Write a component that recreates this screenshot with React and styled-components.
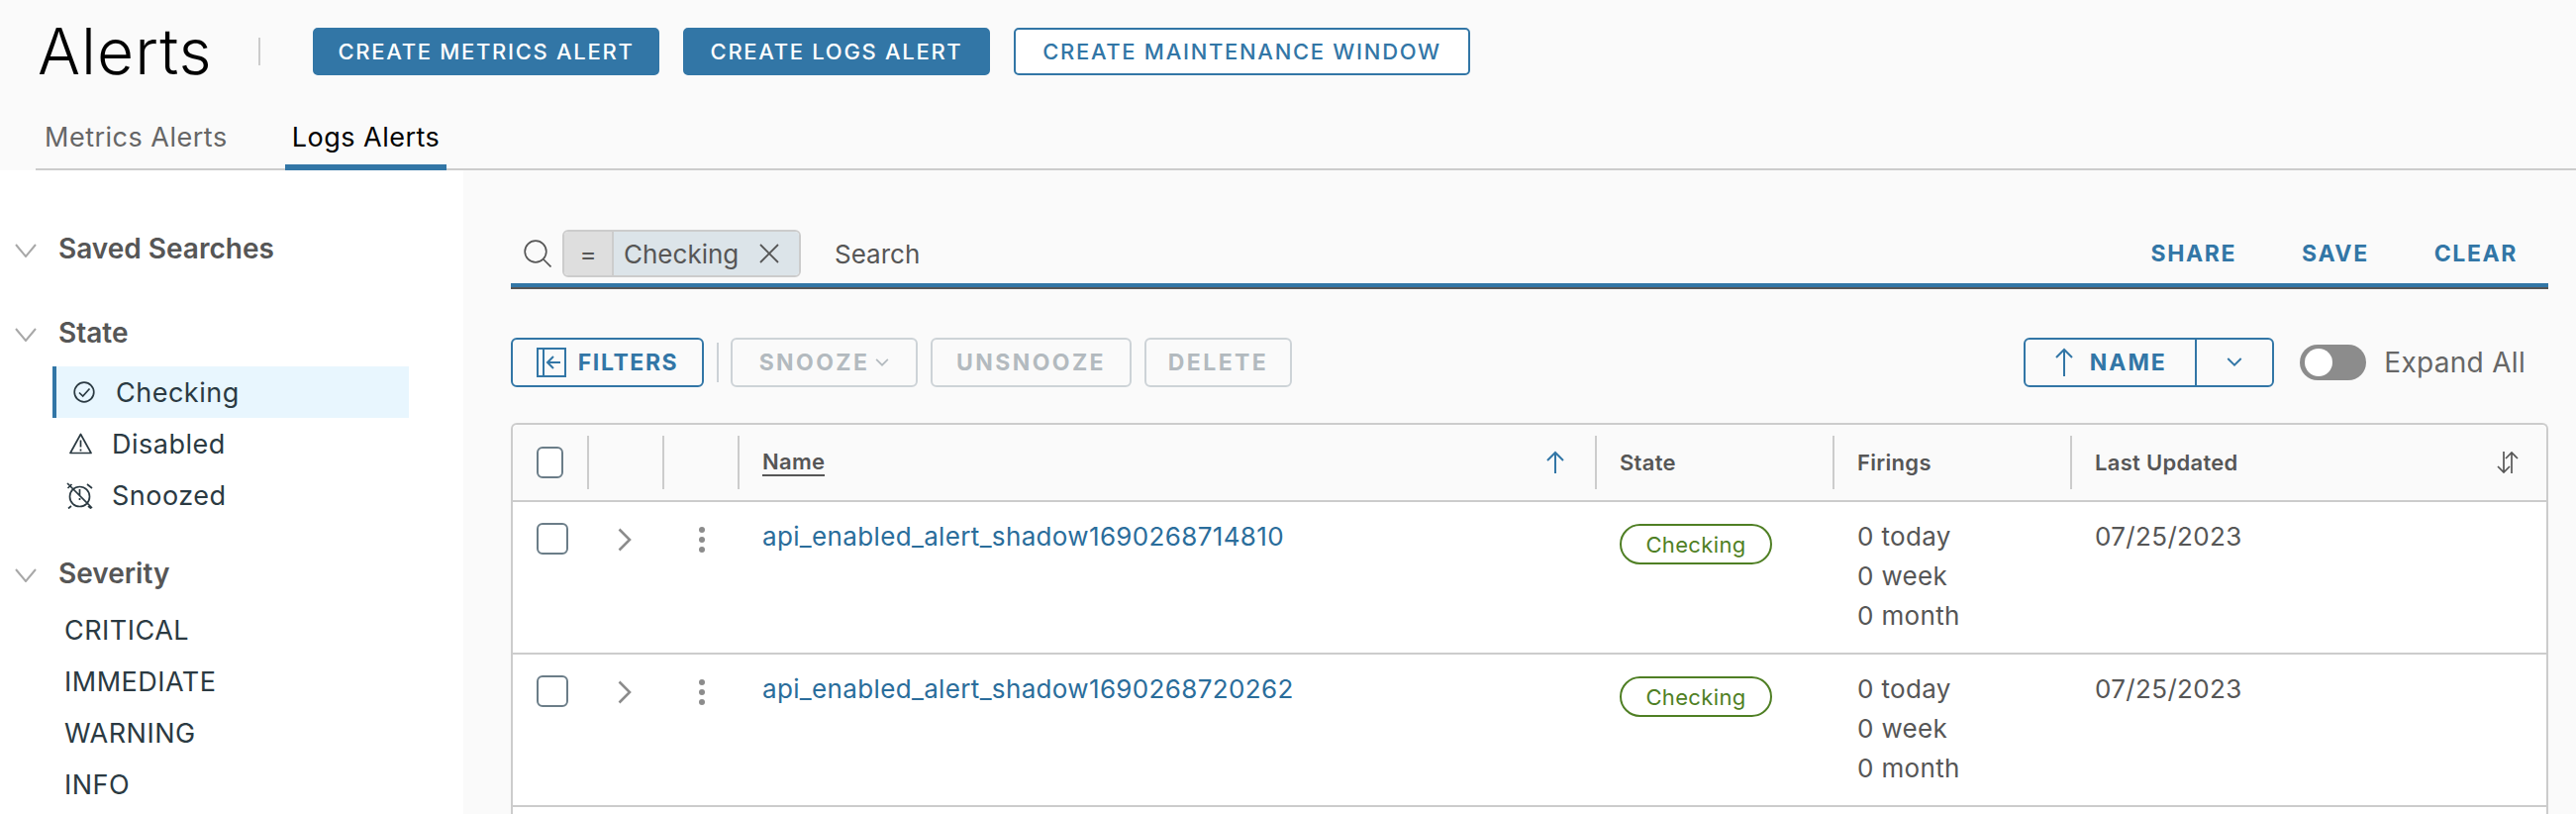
import React from 'react';
import styled, { createGlobalStyle } from 'styled-components';

const BLUE = '#3276a6';
const FONT = 'Inter, "Open Sans", "Liberation Sans", sans-serif';

const GlobalStyle = createGlobalStyle`
  html, body {
    margin: 0;
    padding: 0;
    background: #fff;
  }
  body {
    font-family: ${FONT};
    color: #565656;
    overflow: hidden;
  }
  * {
    box-sizing: border-box;
  }
`;

const Page = styled.div`
  width: 2602px;
  height: 822px;
  overflow: hidden;
  display: flex;
  flex-direction: column;
`;

// 상단 헤더
const Header = styled.header`
  height: 172px;
  flex: none;
  background: #fafafa;
  padding: 28px 0 0 36px;
  display: flex;
  flex-direction: column;
`;

const TitleRow = styled.div`
  display: flex;
  align-items: center;
  height: 48px;
`;

const Title = styled.h1`
  margin: 0 53px 0 2px;
  width: 225px;
  font-size: 64px;
  font-weight: 300;
  letter-spacing: 1px;
  line-height: 48px;
  color: #000;
  display: flex;
  align-items: center;
  justify-content: space-between;

  &::after {
    content: '';
    width: 2px;
    height: 28px;
    background: #ccc;
  }
`;

const ActionButton = styled.button`
  height: 48px;
  width: ${(props) => props.$width}px;
  margin-right: 24px;
  padding: 0;
  border: 2px solid ${BLUE};
  border-radius: 5px;
  background: ${(props) => (props.$outline ? '#fff' : BLUE)};
  color: ${(props) => (props.$outline ? BLUE : '#fff')};
  font-family: ${FONT};
  font-size: 22px;
  font-weight: 500;
  letter-spacing: 1.7px;
`;

const Tabs = styled.nav`
  margin-top: auto;
  height: 68px;
  padding-left: 2px;
  display: flex;
  border-bottom: 2px solid #ccc;
`;

const Tab = styled.div`
  height: 68px;
  padding: 0 7px;
  margin-right: 51px;
  font-size: 27px;
  letter-spacing: 0.5px;
  line-height: 70px;
  color: ${(props) => (props.$active ? '#000' : '#666')};
  border-bottom: ${(props) => (props.$active ? `6px solid ${BLUE}` : 'none')};
`;

const Body = styled.div`
  flex: 1;
  display: grid;
  grid-template-columns: 468px 1fr;
  min-height: 0;
`;

// 왼쪽 필터 영역
const Sidebar = styled.aside`
  background: #fff;
  padding-top: 53px;
`;

const Section = styled.section`
  margin-bottom: ${(props) => props.$after}px;
`;

const SectionHead = styled.div`
  height: 52px;
  display: flex;
  align-items: center;
  gap: 22px;
  padding-left: 15px;
  font-size: 28px;
  font-weight: 600;
  color: #565656;
`;

const FilterList = styled.ul`
  list-style: none;
  margin: ${(props) => props.$top}px 0 0;
  padding: 0;
`;

const FilterItem = styled.li`
  height: 52px;
  margin-left: ${(props) => (props.$active ? 53 : 0)}px;
  width: ${(props) => (props.$active ? 360 : 413)}px;
  padding-left: ${(props) => props.$left}px;
  display: flex;
  align-items: center;
  gap: ${(props) => props.$gap ?? 0}px;
  font-size: 27px;
  letter-spacing: 0.5px;
  color: #2b3a42;
  background: ${(props) => (props.$active ? '#e8f6fe' : 'transparent')};
  border-left: ${(props) => (props.$active ? `4px solid ${BLUE}` : 'none')};
`;

const Content = styled.main`
  background: #fafafa;
  padding: 54px 28px 0 48px;
  display: flex;
  flex-direction: column;
  min-width: 0;
`;

const SearchBar = styled.div`
  height: 64px;
  flex: none;
  padding: 0 31px 0 13px;
  display: flex;
  align-items: center;
  border-bottom: 4px solid ${BLUE};
  box-shadow: 0 2px 0 #565656;
`;

const Chip = styled.div`
  display: flex;
  width: 241px;
  height: 48px;
  margin-left: 11px;
  border: 2px solid #ccc;
  border-radius: 6px;
  overflow: hidden;
  font-size: 26px;
  color: #565656;
`;

const ChipOperator = styled.span`
  width: 50px;
  flex: none;
  display: flex;
  align-items: center;
  justify-content: center;
  background: #dedede;
  border-right: 2px solid #ccc;
`;

const ChipValue = styled.span`
  flex: 1;
  display: flex;
  align-items: center;
  justify-content: space-between;
  padding: 0 20px 0 10px;
  background: #dce4e9;
`;

const SearchText = styled.span`
  margin-left: 34px;
  font-size: 26px;
  color: #565656;
`;

const SearchActions = styled.div`
  margin-left: auto;
  display: flex;
  gap: 66px;
`;

const TextAction = styled.span`
  font-size: 23px;
  font-weight: 700;
  letter-spacing: 1.6px;
  color: ${BLUE};
`;

const Toolbar = styled.div`
  height: 50px;
  flex: none;
  margin-top: 51px;
  display: flex;
  align-items: center;
`;

const ToolButton = styled.button`
  height: 50px;
  width: ${(props) => props.$width}px;
  margin-right: ${(props) => props.$after ?? 13}px;
  padding: 0;
  display: flex;
  align-items: center;
  justify-content: center;
  gap: ${(props) => props.$gap ?? 0}px;
  border: 2px solid ${(props) => (props.disabled ? '#cdd3d7' : BLUE)};
  border-radius: 6px;
  background: transparent;
  color: ${(props) => (props.disabled ? '#b3babf' : BLUE)};
  font-family: ${FONT};
  font-size: 23px;
  font-weight: 700;
  letter-spacing: ${(props) => (props.disabled ? 2.4 : 1.6)}px;
`;

const ToolDivider = styled.span`
  width: 2px;
  height: 40px;
  margin-right: 12px;
  background: #ccd2d6;
`;

const SortGroup = styled.div`
  margin-left: auto;
  width: 253px;
  height: 50px;
  display: flex;
  border: 2px solid ${BLUE};
  border-radius: 6px;
  color: ${BLUE};
`;

const SortLabel = styled.span`
  width: 173px;
  display: flex;
  align-items: center;
  justify-content: center;
  gap: 16px;
  border-right: 2px solid ${BLUE};
  font-size: 23px;
  font-weight: 700;
  letter-spacing: 2px;
`;

const SortCaret = styled.span`
  flex: 1;
  display: flex;
  align-items: center;
  justify-content: center;
`;

const Toggle = styled.span`
  width: 67px;
  height: 36px;
  margin: 0 18px 0 26px;
  flex: none;
  border-radius: 18px;
  background: #8c8c8c;
  padding: 4px 5px;

  &::before {
    content: '';
    display: block;
    width: 28px;
    height: 28px;
    border-radius: 50%;
    background: #fff;
  }
`;

const ToggleLabel = styled.span`
  font-size: 28px;
  letter-spacing: 0.3px;
  color: #666;
  margin-right: 23px;
  white-space: nowrap;
`;

// 테이블
const Table = styled.div`
  flex: 1;
  margin-top: 36px;
  background: #fff;
  border: 2px solid #ccc;
  border-bottom: none;
  border-radius: 6px 6px 0 0;
`;

const COLUMNS = '75px 76px 76px 866px 240px 240px 1fr';

const HeadRow = styled.div`
  display: grid;
  grid-template-columns: ${COLUMNS};
  height: 78px;
  align-items: center;
  background: #fafafa;
  border-bottom: 2px solid #ccc;
  border-radius: 6px 6px 0 0;
`;

const HeadCell = styled.div`
  height: 54px;
  display: flex;
  align-items: center;
  justify-content: space-between;
  padding: 0 ${(props) => props.$right ?? 24}px 0 ${(props) => (props.$first ? 24 : 23)}px;
  border-left: ${(props) => (props.$first ? 'none' : '2px solid #ccc')};
  font-size: 22px;
  font-weight: 600;
  letter-spacing: 0.3px;
  color: #565656;
`;

const NameLabel = styled.span`
  border-bottom: 2px solid #565656;
  line-height: 25px;
`;

const SortedArrow = styled.span`
  color: ${BLUE};
`;

const Row = styled.div`
  display: grid;
  grid-template-columns: ${COLUMNS};
  height: 154px;
  border-bottom: 2px solid #ccc;
  background: #fff;
`;

const Cell = styled.div`
  padding: ${(props) => props.$top ?? 15}px 0 0 ${(props) => props.$left ?? 25}px;
  font-size: 26px;
  letter-spacing: 0.35px;
  line-height: 40px;
  color: #565656;
`;

const Checkbox = styled.span`
  display: block;
  width: 32px;
  height: 32px;
  border: 2px solid #6b7d88;
  border-radius: 6px;
  background: #fff;
`;

const NameLink = styled.a`
  color: #2a6d9b;
  text-decoration: none;
`;

const Badge = styled.span`
  display: flex;
  align-items: center;
  justify-content: center;
  width: 154px;
  height: 41px;
  border: 2px solid #4f7f24;
  border-radius: 21px;
  font-size: 22px;
  color: #4f7f24;
`;

const Icon = styled.svg`
  display: block;
  flex: none;
  fill: none;
  stroke: currentColor;
`;

const Chevron = styled(Icon)`
  color: ${(props) => props.$color ?? '#a8a8a8'};
`;

const HeadChevron = styled(Chevron)`
  margin-top: 4px;
`;

const Dots = styled(Icon)`
  fill: #8c8c8c;
  stroke: none;
`;

const CollapseChevron = () => (
  <HeadChevron width="22" height="14" viewBox="0 0 22 14" strokeWidth="2">
    <path d="M1 1l10 12L21 1" />
  </HeadChevron>
);

const CaretDown = ({ size = 16, color }) => (
  <Chevron width={size} height={size * 0.6} viewBox="0 0 16 10" strokeWidth="2" $color={color}>
    <path d="M1 1l7 7 7-7" />
  </Chevron>
);

const SearchIcon = () => (
  <Icon width="28" height="28" viewBox="0 0 28 28" strokeWidth="1.7">
    <circle cx="12" cy="12" r="10.8" />
    <path d="M20 20l7.500 7.500" />
  </Icon>
);

const CloseIcon = () => (
  <Icon width="20" height="20" viewBox="0 0 20 20" strokeWidth="1.8">
    <path d="M1 1l18 18M19 1L1 19" />
  </Icon>
);

const FilterIcon = () => (
  <Icon width="30" height="30" viewBox="0 0 30 30" strokeWidth="2">
    <rect x="1" y="1" width="28" height="28" />
    <path d="M7 1v28M24 15H12M17 9l-6 6 6 6" />
  </Icon>
);

const ArrowUp = ({ height = 34 }) => (
  <Icon width="20" height={height} viewBox={`0 0 20 ${height}`} strokeWidth="2">
    <path d={`M10 ${height - 1}V2M2 10l8-8 8 8`} />
  </Icon>
);

const SortBoth = () => (
  <Icon width="22" height="22" viewBox="0 0 22 22" strokeWidth="1.7">
    <path d="M7 0v21M1 15l6 6 6-6M15 22V1M9 7l6-6 6 6" />
  </Icon>
);

const CheckCircle = () => (
  <Icon width="22" height="22" viewBox="0 0 22 22" strokeWidth="1.7">
    <circle cx="11" cy="11" r="9.8" />
    <path d="M6 11.5l3.7 3.5L16.5 7.5" />
  </Icon>
);

const WarningIcon = () => (
  <Icon width="23" height="22" viewBox="0 0 23 22" strokeWidth="1.7">
    <path d="M11.500 1.500L1 20.500h21z" strokeLinejoin="round" />
    <path d="M11.500 7.500v7M11.500 16.500v2" />
  </Icon>
);

const SnoozeIcon = () => (
  <Icon width="27" height="27" viewBox="0 0 27 27" strokeWidth="1.7">
    <circle cx="13.500" cy="14.500" r="10" />
    <path d="M1 1l25 25M13.500 7v6M13.500 16v2M1.500 6l4-4M21 2l5 4M5 24l-3 2.500M22 24l3 2.500" />
  </Icon>
);

const RowChevron = () => (
  <Chevron width="14" height="24" viewBox="0 0 14 24" strokeWidth="2.6" $color="#8c8c8c">
    <path d="M1.500 1.500L12 12 1.500 22.500" />
  </Chevron>
);

const MoreDots = () => (
  <Dots width="8" height="28" viewBox="0 0 8 28">
    <circle cx="4" cy="4" r="3" />
    <circle cx="4" cy="14" r="3" />
    <circle cx="4" cy="24" r="3" />
  </Dots>
);

const rows = [
  { name: 'api_enabled_alert_shadow1690268714810', updated: '07/25/2023' },
  { name: 'api_enabled_alert_shadow1690268720262', updated: '07/25/2023' },
];

function App() {
  return (
    <Page>
      <GlobalStyle />
      <Header>
        <TitleRow>
          <Title>Alerts</Title>
          <ActionButton $width={350}>CREATE METRICS ALERT</ActionButton>
          <ActionButton $width={310}>CREATE LOGS ALERT</ActionButton>
          <ActionButton $width={461} $outline>CREATE MAINTENANCE WINDOW</ActionButton>
        </TitleRow>
        <Tabs>
          <Tab>Metrics Alerts</Tab>
          <Tab $active>Logs Alerts</Tab>
        </Tabs>
      </Header>
      <Body>
        <Sidebar>
          <Section $after={33}>
            <SectionHead><CollapseChevron />Saved Searches</SectionHead>
          </Section>
          <Section $after={27}>
            <SectionHead><CollapseChevron />State</SectionHead>
            <FilterList $top={8}>
              <FilterItem $active $left={17} $gap={21}><CheckCircle />Checking</FilterItem>
              <FilterItem $left={70} $gap={20}><WarningIcon />Disabled</FilterItem>
              <FilterItem $left={67} $gap={19}><SnoozeIcon />Snoozed</FilterItem>
            </FilterList>
          </Section>
          <Section $after={0}>
            <SectionHead><CollapseChevron />Severity</SectionHead>
            <FilterList $top={5}>
              <FilterItem $left={65}>CRITICAL</FilterItem>
              <FilterItem $left={65}>IMMEDIATE</FilterItem>
              <FilterItem $left={65}>WARNING</FilterItem>
              <FilterItem $left={65}>INFO</FilterItem>
            </FilterList>
          </Section>
        </Sidebar>
        <Content>
          <SearchBar>
            <SearchIcon />
            <Chip>
              <ChipOperator>=</ChipOperator>
              <ChipValue>Checking<CloseIcon /></ChipValue>
            </Chip>
            <SearchText>Search</SearchText>
            <SearchActions>
              <TextAction>SHARE</TextAction>
              <TextAction>SAVE</TextAction>
              <TextAction>CLEAR</TextAction>
            </SearchActions>
          </SearchBar>
          <Toolbar>
            <ToolButton $width={195} $gap={12}><FilterIcon />FILTERS</ToolButton>
            <ToolDivider />
            <ToolButton $width={189} $gap={6} disabled>SNOOZE<CaretDown size={14} color="#b3babf" /></ToolButton>
            <ToolButton $width={203} disabled>UNSNOOZE</ToolButton>
            <ToolButton $width={149} $after={0} disabled>DELETE</ToolButton>
            <SortGroup>
              <SortLabel><ArrowUp height={30} />NAME</SortLabel>
              <SortCaret><CaretDown color={BLUE} /></SortCaret>
            </SortGroup>
            <Toggle />
            <ToggleLabel>Expand All</ToggleLabel>
          </Toolbar>
          <Table>
            <HeadRow>
              <HeadCell $first><Checkbox /></HeadCell>
              <HeadCell />
              <HeadCell />
              <HeadCell $right={30}><NameLabel>Name</NameLabel><SortedArrow><ArrowUp height={24} /></SortedArrow></HeadCell>
              <HeadCell>State</HeadCell>
              <HeadCell>Firings</HeadCell>
              <HeadCell $right={28}>Last Updated<SortBoth /></HeadCell>
            </HeadRow>
            {rows.map((row) => (
              <Row key={row.name}>
                <Cell $top={21} $left={24}><Checkbox /></Cell>
                <Cell $top={26} $left={31}><RowChevron /></Cell>
                <Cell $top={24} $left={36}><MoreDots /></Cell>
                <Cell><NameLink>{row.name}</NameLink></Cell>
                <Cell $top={22}><Badge>Checking</Badge></Cell>
                <Cell>0 today<br />0 week<br />0 month</Cell>
                <Cell>{row.updated}</Cell>
              </Row>
            ))}
          </Table>
        </Content>
      </Body>
    </Page>
  );
}

export default App;
